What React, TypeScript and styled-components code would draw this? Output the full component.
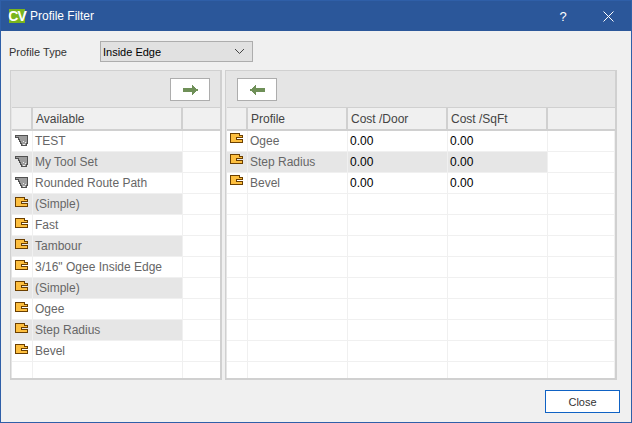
import React from 'react';
import styled, { createGlobalStyle } from 'styled-components';

const GlobalStyle = createGlobalStyle`
    html, body {
        margin: 0;
        padding: 0;
        width: 632px;
        height: 423px;
        overflow: hidden;
    }
    body {
        font-family: "Liberation Sans", Arial, sans-serif;
        font-size: 12px;
    }
`;

const available = [
    { name: 'TEST', icon: 'tool' },
    { name: 'My Tool Set', icon: 'tool' },
    { name: 'Rounded Route Path', icon: 'tool' },
    { name: '(Simple)', icon: 'folder' },
    { name: 'Fast', icon: 'folder' },
    { name: 'Tambour', icon: 'folder' },
    { name: '3/16" Ogee Inside Edge', icon: 'folder' },
    { name: '(Simple)', icon: 'folder' },
    { name: 'Ogee', icon: 'folder' },
    { name: 'Step Radius', icon: 'folder' },
    { name: 'Bevel', icon: 'folder' },
    { name: '', icon: '' },
];

const selected = ['Ogee', 'Step Radius', 'Bevel', '', '', '', '', '', '', '', '', ''];

const ToolIcon = () => (
    <svg width="13" height="12" viewBox="0 0 13 12" shapeRendering="crispEdges">
        <path
            d="M0.5 0.5H12.5V8.5H11.5V10.5H6.5V8.5H5.5V6.5H4.5V4.5H3.5V2.5H0.5Z"
            fill="#9c9c9c"
            stroke="#505050"
        />
        <path d="M8 6h1v1H8zM10 7h1v1h-1zM8 9h2v1H8z" fill="#ececec" />
    </svg>
);

const FolderIcon = () => (
    <svg width="14" height="11" viewBox="0 0 14 11" shapeRendering="crispEdges">
        <path d="M0.5 0.5H9.5V2.5H12.5V4.5H6.5V6.5H12.5V9.5H0.5Z" fill="#fdbf3f" stroke="#6b3f00" />
    </svg>
);

const ArrowIcon = ({ flip }: Readonly<{ flip?: boolean }>) => (
    <svg
        width="15"
        height="10"
        viewBox="0 0 15 10"
        shapeRendering="crispEdges"
        style={flip ? { transform: 'scaleX(-1)' } : undefined}
    >
        <path d="M0 3H9V0H10V1H11V2H12V3H13V4H15V6H13V7H12V8H11V9H10V10H9V7H0Z" fill="#6f9058" />
    </svg>
);

const Chevron = () => (
    <svg width="11" height="7" viewBox="0 0 11 7">
        <path d="M1 1l4.5 4.5L10 1" fill="none" stroke="#444" strokeWidth="1" />
    </svg>
);

const CloseGlyph = () => (
    <svg width="11" height="11" viewBox="0 0 11 11">
        <path d="M0.5 0.5l10 10M10.5 0.5l-10 10" stroke="#fff" strokeWidth="1" />
    </svg>
);

const App = () => (
    <Window>
        <GlobalStyle />
        <TitleBar>
            <Logo>CV</Logo>
            <Title>Profile Filter</Title>
            <Help>?</Help>
            <CloseX>
                <CloseGlyph />
            </CloseX>
        </TitleBar>
        <Body>
            <TypeRow>
                <TypeLabel>Profile Type</TypeLabel>
                <Combo>
                    <span>Inside Edge</span>
                    <Chevron />
                </Combo>
            </TypeRow>
            <Panels>
                <Panel width={212}>
                    <Toolbar align="flex-end">
                        <ArrowButton>
                            <ArrowIcon />
                        </ArrowButton>
                    </Toolbar>
                    <Grid>
                        <HeaderRow columns={LEFT_COLUMNS}>
                            <HeaderCell />
                            <HeaderCell>Available</HeaderCell>
                            <HeaderCell />
                        </HeaderRow>
                        {available.map((item, index) => (
                            <Row key={index} columns={LEFT_COLUMNS}>
                                <IconCell shaded={index % 2 === 1 && !!item.name}>
                                    {item.icon === 'tool' && (
                                        <IconSlot top={4}>
                                            <ToolIcon />
                                        </IconSlot>
                                    )}
                                    {item.icon === 'folder' && (
                                        <IconSlot top={3}>
                                            <FolderIcon />
                                        </IconSlot>
                                    )}
                                </IconCell>
                                <Cell shaded={index % 2 === 1 && !!item.name}>{item.name}</Cell>
                                <Cell />
                            </Row>
                        ))}
                    </Grid>
                </Panel>
                <Panel width={392}>
                    <Toolbar align="flex-start">
                        <ArrowButton>
                            <ArrowIcon flip />
                        </ArrowButton>
                    </Toolbar>
                    <Grid>
                        <HeaderRow columns={RIGHT_COLUMNS}>
                            <HeaderCell />
                            <HeaderCell>Profile</HeaderCell>
                            <HeaderCell>Cost /Door</HeaderCell>
                            <HeaderCell>Cost /SqFt</HeaderCell>
                            <HeaderCell />
                        </HeaderRow>
                        {selected.map((name, index) => (
                            <Row key={index} columns={RIGHT_COLUMNS}>
                                <IconCell shaded={index === 1}>
                                    {name && (
                                        <IconSlot top={2}>
                                            <FolderIcon />
                                        </IconSlot>
                                    )}
                                </IconCell>
                                <Cell shaded={index === 1}>{name}</Cell>
                                <ValueCell shaded={index === 1}>{name && '0.00'}</ValueCell>
                                <ValueCell shaded={index === 1}>{name && '0.00'}</ValueCell>
                                <Cell />
                            </Row>
                        ))}
                    </Grid>
                </Panel>
            </Panels>
            <Footer>
                <CloseButton>Close</CloseButton>
            </Footer>
        </Body>
    </Window>
);

const LEFT_COLUMNS = '21px 150px 38px';
const RIGHT_COLUMNS = '21px 100px 100px 100px 67px';

const Window = styled.div`
    box-sizing: border-box;
    width: 632px;
    height: 423px;
    display: flex;
    flex-direction: column;
    border: 1px solid #2f5fa8;
    background-color: #f0f0f0;
`;

const TitleBar = styled.div`
    height: 30px;
    flex: none;
    display: flex;
    align-items: center;
    padding-left: 8px;
    background-color: #2b579a;
    color: #fff;
`;

const Logo = styled.div`
    width: 16px;
    height: 14px;
    display: flex;
    align-items: center;
    justify-content: center;
    background-color: #7ab51d;
    color: #fff;
    font-size: 14px;
    font-weight: bold;
    letter-spacing: -1px;
`;

const Title = styled.div`
    margin-left: 5px;
    font-size: 12px;
    flex: 1;
`;

const Help = styled.div`
    width: 20px;
    text-align: center;
    font-size: 13px;
    margin-right: 30px;
`;

const CloseX = styled.div`
    width: 11px;
    height: 11px;
    display: flex;
    margin-right: 17px;
`;

const Body = styled.div`
    flex: 1;
    display: flex;
    flex-direction: column;
    padding-top: 10px;
`;

const TypeRow = styled.div`
    height: 21px;
    display: flex;
    align-items: center;
    padding-left: 8px;
`;

const TypeLabel = styled.div`
    width: 91px;
    font-size: 11px;
    color: #333;
`;

const Combo = styled.div`
    box-sizing: border-box;
    width: 153px;
    height: 21px;
    display: flex;
    align-items: center;
    justify-content: space-between;
    padding: 0 7px 0 2px;
    border: 1px solid #adadad;
    background-color: #e1e1e1;
    color: #000;
    font-size: 11px;
`;

const Panels = styled.div`
    display: flex;
    gap: 3px;
    margin-top: 8px;
    padding-left: 9px;
`;

const Panel = styled.div<{ width: number }>`
    box-sizing: border-box;
    width: ${({ width }) => width}px;
    height: 310px;
    display: flex;
    flex-direction: column;
    border: 2px solid #d0d0d0;
    border-top-width: 1px;
    border-left-width: 1px;
    background-color: #e5e5e5;
`;

const Toolbar = styled.div<{ align: string }>`
    height: 36px;
    flex: none;
    display: flex;
    align-items: flex-start;
    justify-content: ${({ align }) => align};
    padding: 7px 10px 0 11px;
    box-sizing: border-box;
`;

const ArrowButton = styled.div`
    box-sizing: border-box;
    width: 40px;
    height: 23px;
    display: flex;
    align-items: center;
    justify-content: center;
    border: 1px solid #adadad;
    background-color: #fff;
`;

const Grid = styled.div`
    flex: 1;
    margin-left: 1px;
    overflow: hidden;
    background-color: #fff;
`;

const HeaderRow = styled.div<{ columns: string }>`
    box-sizing: border-box;
    height: 24px;
    display: grid;
    grid-template-columns: ${({ columns }) => columns};
    border-top: 1px solid #d0d0d0;
    border-bottom: 2px solid #d0d0d0;
    background-color: #f0f0f0;
`;

const HeaderCell = styled.div`
    box-sizing: border-box;
    display: flex;
    align-items: center;
    padding-left: 3px;
    border-right: 2px solid #d0d0d0;
    color: #444;
    font-size: 12px;

    &:last-child {
        border-right: none;
    }
`;

const Row = styled.div<{ columns: string }>`
    box-sizing: border-box;
    height: 21px;
    display: grid;
    grid-template-columns: ${({ columns }) => columns};
    border-bottom: 1px solid #f0f0f0;
`;

const Cell = styled.div<{ shaded?: boolean }>`
    box-sizing: border-box;
    display: flex;
    align-items: center;
    padding-left: 2px;
    border-right: 1px solid #f0f0f0;
    background-color: ${({ shaded }) => (shaded ? '#e6e6e6' : '#fff')};
    color: #666;
    font-size: 12px;
    white-space: nowrap;
`;

const IconCell = styled(Cell)`
    padding-left: 3px;
`;

const ValueCell = styled(Cell)`
    color: #000;
`;

const IconSlot = styled.div<{ top: number }>`
    align-self: flex-start;
    height: 12px;
    margin-top: ${({ top }) => top}px;
    line-height: 0;
`;

const Footer = styled.div`
    display: flex;
    justify-content: flex-end;
    padding: 10px 11px 0 0;
`;

const CloseButton = styled.div`
    box-sizing: border-box;
    width: 75px;
    height: 23px;
    display: flex;
    align-items: center;
    justify-content: center;
    border: 1px solid #0f62c4;
    background-color: #fff;
    color: #333;
    font-size: 11px;
`;

export default App;
